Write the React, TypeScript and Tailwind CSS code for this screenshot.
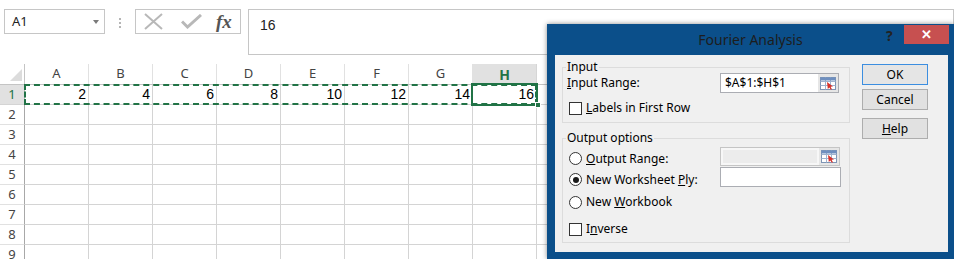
import React from "react"

const cols = ["A", "B", "C", "D", "E", "F", "G", "H", ""]
const values = [2, 4, 6, 8, 10, 12, 14, 16]
const rows = [1, 2, 3, 4, 5, 6, 7, 8, 9]

const RefEditIcon = () => (
  <svg width="16" height="13" viewBox="0 0 16 13">
    <rect x="0.5" y="0.5" width="15" height="12" fill="#ffffff" stroke="#7f95b5" />
    <path d="M0.5 4.5H15.5M0.5 8.5H15.5M5.5 0.5V12.5M10.5 0.5V12.5" stroke="#9fb3cf" />
    <rect x="0.5" y="0.5" width="15" height="3" fill="#6f8fbf" />
    <path d="M7 5L13 9.5L10.5 9.8L12 12.3L10.8 12.8L9.4 10.4L7.8 12Z" fill="#d8322a" />
  </svg>
)

const Checkbox = () => <span className="h-[13px] w-[13px] border border-[#333333] bg-white" />

const Radio = ({ checked }: { checked?: boolean }) => (
  <span className="flex h-[13px] w-[13px] items-center justify-center rounded-full border border-[#333333] bg-white">
    {checked && <span className="h-[6px] w-[6px] rounded-full bg-[#1a1a1a]" />}
  </span>
)

const FormulaBar = () => (
  <div className="flex h-[64px] items-start pl-[4px] pt-[9px]">
    <div className="flex h-[25px] w-[101px] items-center justify-between border border-[#c6c6c6] pl-[7px] pr-[5px] text-[13px] text-[#222222]">
      <span>A1</span>
      <span className="h-0 w-0 border-x-[3px] border-t-[4px] border-x-transparent border-t-[#7a7a7a]" />
    </div>
    <div className="ml-[14px] mt-[9px] flex flex-col gap-[2px]">
      <span className="h-[2px] w-[2px] bg-[#b5b5b5]" />
      <span className="h-[2px] w-[2px] bg-[#b5b5b5]" />
      <span className="h-[2px] w-[2px] bg-[#b5b5b5]" />
    </div>
    <div className="ml-[14px] flex h-[25px] w-[106px] items-center border border-[#c6c6c6] pl-[8px]">
      <svg width="20" height="17" viewBox="0 0 20 17">
        <path d="M1 1L18 16M18 1L1 16" stroke="#b8b8b8" strokeWidth="2" />
      </svg>
      <svg className="ml-[17px]" width="21" height="15" viewBox="0 0 21 15">
        <path d="M1 7.5L6.5 13L20 1" stroke="#b8b8b8" strokeWidth="3" fill="none" />
      </svg>
      <span className="ml-[14px] font-['Liberation_Serif',serif] text-[19px] font-bold italic leading-[20px] text-[#555555]">fx</span>
    </div>
    <div className="ml-[7px] h-[46px] flex-1 border border-[#c6c6c6] pl-[11px] pt-[5px] font-['Liberation_Sans',sans-serif] text-[14px] text-[#222222]">
      16
    </div>
  </div>
)

const Sheet = () => (
  <div className="relative">
    <div className="flex h-[21px] border-b border-[#c4c4c4]">
      <div className="flex w-[25px] items-end justify-end border-r border-[#c4c4c4] pb-[3px] pr-[2px]">
        <svg width="12" height="12" viewBox="0 0 12 12">
          <path d="M12 0V12H0Z" fill="#dcdcdc" />
        </svg>
      </div>
      {cols.map((c) => (
        <div
          key={c || "x"}
          className={
            c === "H"
              ? "flex w-[64px] shrink-0 items-center justify-center border-r border-[#d6d6d6] bg-[#e1e1e1] text-[14px] font-bold text-[#217346]"
              : "flex w-[64px] shrink-0 items-center justify-center border-r border-[#e1e1e1] text-[13px] text-[#444444]"
          }
        >
          {c}
        </div>
      ))}
    </div>
    {rows.map((r) => (
      <div key={r} className="flex h-[20px]">
        <div
          className={
            r === 1
              ? "flex w-[25px] shrink-0 items-center justify-center border-b border-r border-[#bdbdbd] border-b-[#d4d4d4] bg-[#e1e1e1] text-[13px] text-[#217346]"
              : "flex w-[25px] shrink-0 items-center justify-center border-b border-r border-[#a8a8a8] border-b-[#e1e1e1] text-[13px] text-[#444444]"
          }
        >
          {r}
        </div>
        {cols.map((c, i) => (
          <div
            key={c || "x"}
            className="flex w-[64px] shrink-0 items-center justify-end border-b border-r border-[#d4d4d4] pr-[2px] font-['Liberation_Sans',sans-serif] text-[14px] text-black"
          >
            {r === 1 && i < 8 ? values[i] : ""}
          </div>
        ))}
      </div>
    ))}
    <div className="absolute left-[24px] top-[20px] h-[21px] w-[513px] border-2 border-dashed border-[#217346]" />
    <div className="absolute left-[471px] top-[19px] h-[23px] w-[67px] border-2 border-[#217346]" />
    <div className="absolute left-[535px] top-[38px] h-[6px] w-[6px] border border-white bg-[#217346]" />
  </div>
)

const FourierDialog = () => (
  <div className="absolute left-[547px] top-[24px] flex h-[235px] w-[407px] flex-col bg-[#0b4f8a] font-['Noto_Sans',sans-serif] text-[12px] text-black shadow-[0_0_5px_rgba(0,0,0,0.45)]">
    <div className="flex h-[31px] items-start">
      <div className="w-[68px]" />
      <div className="flex h-[31px] flex-1 items-center justify-center text-[14px] text-[#1d1d1d]">Fourier Analysis</div>
      <div className="flex w-[68px] items-start">
        <span className="mt-[3px] font-bold text-[14px] leading-[18px] text-[#222222]">?</span>
        <span className="ml-[11px] mt-[1px] flex h-[19px] w-[45px] items-center justify-center bg-[#c75050] text-[13px] font-bold text-white">
          ✕
        </span>
      </div>
    </div>
    <div className="mb-[7px] ml-[8px] mr-[6px] flex flex-1 bg-[#f0f0f0] pl-[7px]">
      <div className="flex w-[288px] flex-col">
        <fieldset className="mt-[6px] h-[62px] border border-[#dcdcdc]">
          <legend className="ml-[3px] px-[1px] leading-[12px]">Input</legend>
          <div className="flex h-[20px] items-center">
            <span className="w-[157px] pl-[4px]">
              <u>I</u>nput Range:
            </span>
            <div className="flex h-[20px] w-[119px] border border-[#abadb3] bg-white">
              <span className="flex flex-1 items-center pl-[4px]">$A$1:$H$1</span>
              <span className="flex w-[20px] items-center justify-center bg-[#e6e6e6]">
                <RefEditIcon />
              </span>
            </div>
          </div>
          <div className="mt-[7px] flex h-[16px] items-center gap-[4px] pl-[6px]">
            <Checkbox />
            <span>
              <u>L</u>abels in First Row
            </span>
          </div>
        </fieldset>
        <fieldset className="mt-[9px] h-[111px] border border-[#dcdcdc]">
          <legend className="ml-[3px] px-[1px] leading-[12px]">Output options</legend>
          <div className="mt-[3px] flex h-[19px] items-center">
            <span className="mt-[4px] flex w-[157px] items-center gap-[4px] pl-[6px]">
              <Radio />
              <span>
                <u>O</u>utput Range:
              </span>
            </span>
            <div className="flex h-[19px] w-[120px] border border-[#c5c5c5] bg-[#f7f7f7]">
              <span className="m-[2px] flex-1 bg-[#ececec]" />
              <span className="flex w-[20px] items-center justify-center bg-[#e6e6e6]">
                <RefEditIcon />
              </span>
            </div>
          </div>
          <div className="mt-[1px] flex h-[20px] items-center">
            <span className="mt-[5px] flex w-[157px] items-center gap-[4px] pl-[6px]">
              <Radio checked />
              <span>
                New Worksheet <u>P</u>ly:
              </span>
            </span>
            <div className="h-[20px] w-[121px] border border-[#abadb3] bg-white" />
          </div>
          <div className="mt-[5px] flex h-[20px] items-center gap-[4px] pl-[6px]">
            <Radio />
            <span>
              New <u>W</u>orkbook
            </span>
          </div>
          <div className="mt-[9px] flex h-[16px] items-center gap-[4px] pl-[6px]">
            <Checkbox />
            <span>
              I<u>n</u>verse
            </span>
          </div>
        </fieldset>
      </div>
      <div className="ml-[12px] flex flex-col pt-[9px]">
        <button className="h-[21px] w-[66px] border border-[#3c8ee0] bg-[#e5e5e5]">OK</button>
        <button className="mt-[4px] h-[21px] w-[66px] border border-[#adadad] bg-[#e1e1e1]">Cancel</button>
        <button className="mt-[8px] h-[21px] w-[66px] border border-[#adadad] bg-[#e1e1e1]">
          <u>H</u>elp
        </button>
      </div>
    </div>
  </div>
)

export default function App() {
  return (
    <div className="relative h-[259px] w-[954px] overflow-hidden bg-white font-['Noto_Sans',sans-serif]">
      <FormulaBar />
      <Sheet />
      <FourierDialog />
    </div>
  )
}
